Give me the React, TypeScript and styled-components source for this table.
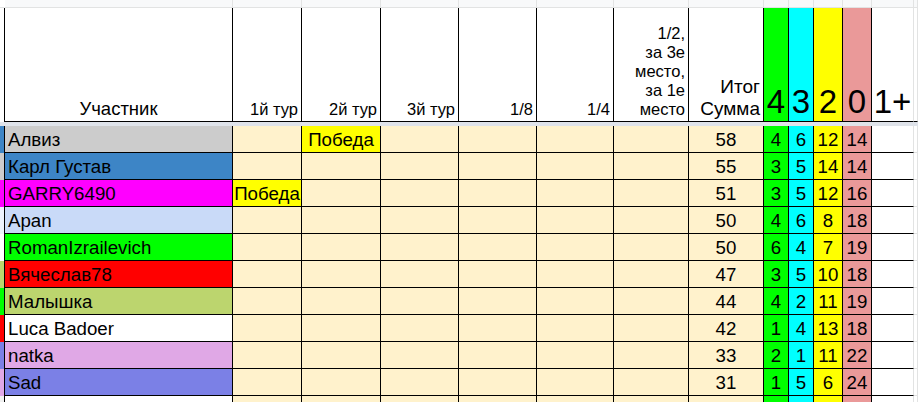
import React from "react";
import styled, { createGlobalStyle } from "styled-components";

const GlobalStyle = createGlobalStyle`
  html, body {
    margin: 0;
    padding: 0;
    background: #ffffff;
    overflow: hidden;
  }
  body {
    font-family: "Liberation Sans", Arial, sans-serif;
    color: #000000;
  }
`;

type Player = {
  name: string;
  color: string;
  strip: string;
  t1?: string;
  t2?: string;
  sum: number;
  counts: number[];
};

const players: Player[] = [
  { name: "Алвиз", color: "#cccccc", strip: "#3d85c6", t2: "Победа", sum: 58, counts: [4, 6, 12, 14] },
  { name: "Карл Густав", color: "#3d85c6", strip: "#cccccc", sum: 55, counts: [3, 5, 14, 14] },
  { name: "GARRY6490", color: "#ff00ff", strip: "#ff00ff", t1: "Победа", sum: 51, counts: [3, 5, 12, 16] },
  { name: "Apan", color: "#c9daf8", strip: "#eef3fd", sum: 50, counts: [4, 6, 8, 18] },
  { name: "RomanIzrailevich", color: "#00ff00", strip: "#ffffff", sum: 50, counts: [6, 4, 7, 19] },
  { name: "Вячеслав78", color: "#ff0000", strip: "#bcd56e", sum: 47, counts: [3, 5, 10, 18] },
  { name: "Малышка", color: "#bcd56e", strip: "#00ff00", sum: 44, counts: [4, 2, 11, 19] },
  { name: "Luca Badoer", color: "#ffffff", strip: "#ff0000", sum: 42, counts: [1, 4, 13, 18] },
  { name: "natka", color: "#e0a8e6", strip: "#7b80e6", sum: 33, counts: [2, 1, 11, 22] },
  { name: "Sad", color: "#7b80e6", strip: "#e0a8e6", sum: 31, counts: [1, 5, 6, 24] },
];

const scoreColors = ["#00ff00", "#00ffff", "#ffff00", "#ea9999"];
const cream = "#fff2cc";
const grid = "#e2e3e3";

const Sheet = styled.div`
  display: grid;
  grid-template-columns: 5px 228px 69px 79px 78px 78px 77px 75px 75px 25px 25px 29px 29px 42px 1fr;
  grid-template-rows: 8px 114px 4px;
  grid-auto-rows: 27px;
  width: 918px;
  height: 402px;
  overflow: hidden;
`;

const TopCell = styled.div<{ $blank?: boolean }>`
  background: ${(p) => (p.$blank ? "#ffffff" : "#f8f9fa")};
  border-right: 1px solid ${(p) => (p.$blank ? "transparent" : grid)};
  border-bottom: 1px solid ${grid};
`;

const Cell = styled.div<{
  $bg?: string;
  $align?: "left" | "center" | "right";
  $edge?: "black" | "grid";
  $rowEdge?: "black" | "grid";
}>`
  display: flex;
  align-items: flex-end;
  justify-content: ${(p) =>
    p.$align === "left" ? "flex-start" : p.$align === "right" ? "flex-end" : "center"};
  background: ${(p) => p.$bg ?? "#ffffff"};
  border-right: 1px solid ${(p) => (p.$edge === "grid" ? grid : "#000000")};
  border-bottom: 1px solid ${(p) => (p.$rowEdge === "grid" ? grid : "#000000")};
  padding-left: ${(p) => (p.$align === "left" ? 3 : 0)}px;
  padding-right: ${(p) => (p.$align === "right" ? 3 : 0)}px;
  padding-bottom: 3px;
  font-size: 18.7px;
  line-height: 19px;
  white-space: nowrap;
  overflow: hidden;
  box-sizing: border-box;
`;

const HeadText = styled.span<{ $size: number; $line: number; $pb?: number }>`
  display: block;
  font-size: ${(p) => p.$size}px;
  line-height: ${(p) => p.$line}px;
  margin-bottom: ${(p) => p.$pb ?? 0}px;
  white-space: pre-line;
  text-align: right;
`;

const FreezeBar = styled.div`
  grid-column: 1 / -1;
  background: #dfe3ea;
`;

const Strip = styled.div<{ $bg: string }>`
  background: ${(p) => p.$bg};
  border-right: 1px solid #000000;
`;

const columnCount = 15;

const App = () => {
  const bodyRows = [...players, null];
  return (
    <>
      <GlobalStyle />
      <Sheet>
        {Array.from({ length: columnCount }).map((_, i) => (
          <TopCell key={`top-${i}`} $blank={i === 0} />
        ))}

        <Strip $bg="#ffffff" />
        <Cell>
          <HeadText $size={18.5} $line={19}>Участник</HeadText>
        </Cell>
        {["1й тур", "2й тур", "3й тур", "1/8", "1/4"].map((label) => (
          <Cell key={label} $align="right">
            <HeadText $size={16.5} $line={17}>{label}</HeadText>
          </Cell>
        ))}
        <Cell $align="right">
          <HeadText $size={16.5} $line={19} $pb={-1}>{"1/2,\nза 3е\nместо,\nза 1е\nместо"}</HeadText>
        </Cell>
        <Cell $align="right">
          <HeadText $size={19} $line={22} $pb={-2}>{"Итог\nСумма"}</HeadText>
        </Cell>
        {["4", "3", "2", "0"].map((d, i) => (
          <Cell key={`h-${d}`} $bg={scoreColors[i]}>
            <HeadText $size={33} $line={34} $pb={-1}>{d}</HeadText>
          </Cell>
        ))}
        <Cell $edge="grid">
          <HeadText $size={33} $line={34} $pb={-1}>1+</HeadText>
        </Cell>
        <Cell $edge="grid" />

        <FreezeBar />

        {bodyRows.map((p, r) => (
          <React.Fragment key={`row-${r}`}>
            <Strip $bg={p ? p.strip : "#f1f1f1"} />
            <Cell $align="left" $bg={p ? p.color : "#ffffff"}>
              {p?.name}
            </Cell>
            <Cell $bg={p?.t1 ? "#ffff00" : cream}>{p?.t1}</Cell>
            <Cell $bg={p?.t2 ? "#ffff00" : cream}>{p?.t2}</Cell>
            <Cell $bg={cream} />
            <Cell $bg={cream} />
            <Cell $bg={cream} />
            <Cell $bg={cream} />
            <Cell $bg={cream}>{p?.sum}</Cell>
            {scoreColors.map((c, i) => (
              <Cell key={`s-${i}`} $bg={c}>
                {p?.counts[i]}
              </Cell>
            ))}
            <Cell $edge="grid" />
            <Cell $edge="grid" $rowEdge="grid" />
          </React.Fragment>
        ))}
      </Sheet>
    </>
  );
};

export default App;
